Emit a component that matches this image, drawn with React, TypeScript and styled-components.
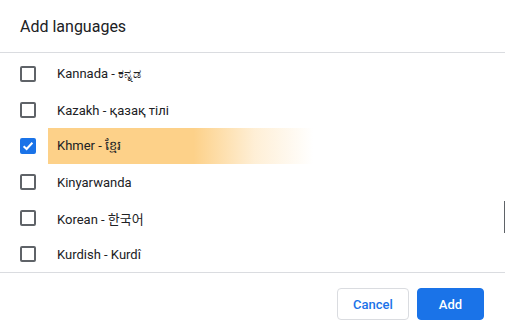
import React from "react";
import styled, { createGlobalStyle } from "styled-components";

const Global = createGlobalStyle`
  html, body { margin: 0; padding: 0; background: #ffffff; }
  * { box-sizing: border-box; }
`;

const Dialog = styled.div`
  position: relative;
  width: 505px;
  height: 332px;
  background: #ffffff;
  font-family: Roboto, "Noto Sans", "Noto Sans CJK KR", sans-serif;
  color: #202124;
  display: flex;
  flex-direction: column;
  overflow: hidden;
`;

const Header = styled.div`
  height: 53px;
  padding: 17px 20px 0;
  border-bottom: 1px solid #dadce0;
  font-size: 16px;
  line-height: 20px;
  font-weight: 400;
`;

const List = styled.div`
  flex: 1;
  padding-top: 3px;
  display: flex;
  flex-direction: column;
`;

const Row = styled.div`
  height: 36px;
  display: flex;
  align-items: center;
  padding-left: 20px;
`;

const Box = styled.span<{ $checked?: boolean }>`
  width: 16px;
  height: 16px;
  border-radius: 2px;
  border: 2px solid ${(p) => (p.$checked ? "#1a73e8" : "#5f6368")};
  background: ${(p) => (p.$checked ? "#1a73e8" : "transparent")};
  display: flex;
  align-items: center;
  justify-content: center;
  margin-right: 12px;
  flex: none;
`;

const Label = styled.span<{ $highlight?: boolean }>`
  width: 265px;
  height: 36px;
  padding-left: 9px;
  display: flex;
  align-items: center;
  font-size: 13px;
  color: #202124;
  background: ${(p) =>
    p.$highlight
      ? "linear-gradient(to right, #fdd189 0%, #fdd189 55%, rgba(253,209,137,0.35) 78%, rgba(253,209,137,0) 100%)"
      : "transparent"};
`;

const Footer = styled.div`
  height: 60px;
  border-top: 1px solid #dadce0;
  display: flex;
  justify-content: flex-end;
  align-items: flex-start;
  gap: 8px;
  padding: 15px 21px 0 0;
`;

const Button = styled.button<{ $primary?: boolean; $width: number }>`
  width: ${(p) => p.$width}px;
  height: 32px;
  border-radius: 4px;
  font-family: Roboto, sans-serif;
  font-size: 13px;
  font-weight: 500;
  padding: 0;
  cursor: pointer;
  border: 1px solid ${(p) => (p.$primary ? "#1a73e8" : "#dadce0")};
  background: ${(p) => (p.$primary ? "#1a73e8" : "#ffffff")};
  color: ${(p) => (p.$primary ? "#ffffff" : "#1a73e8")};
`;

const ScrollThumb = styled.div`
  position: absolute;
  right: 0;
  top: 201px;
  width: 1px;
  height: 32px;
  background: #5f6368;
`;

const items = [
  { name: "Kannada - ಕನ್ನಡ" },
  { name: "Kazakh - қазақ тілі" },
  { name: "Khmer - ខ្មែរ", checked: true, highlight: true },
  { name: "Kinyarwanda" },
  { name: "Korean - 한국어" },
  { name: "Kurdish - Kurdî" },
];

const Check = () => (
  <svg width="12" height="12" viewBox="0 0 12 12">
    <path d="M1.6 6.2 L4.6 9 L10.4 2.8" fill="none" stroke="#ffffff" strokeWidth="2" />
  </svg>
);

export default function App() {
  return (
    <>
      <Global />
      <Dialog>
        <Header>Add languages</Header>
        <List>
          {items.map((it) => (
            <Row key={it.name}>
              <Box $checked={it.checked}>{it.checked && <Check />}</Box>
              <Label $highlight={it.highlight}>{it.name}</Label>
            </Row>
          ))}
        </List>
        <Footer>
          <Button $width={72}>Cancel</Button>
          <Button $primary $width={67}>Add</Button>
        </Footer>
        <ScrollThumb />
      </Dialog>
    </>
  );
}
